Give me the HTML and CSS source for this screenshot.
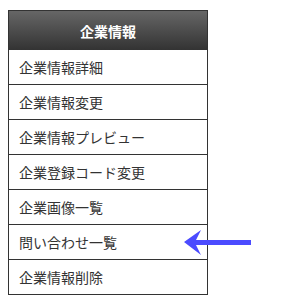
FILE: index.html
```html
<!DOCTYPE html>
<html lang="ja">
  <head>
    <meta charset="UTF-8" />
    <title>企業情報</title>
    <link rel="stylesheet" href="styles.css">
  </head>
  <body>
    <div class="menu">
      <div class="menu-title">企業情報</div>
      <ul class="menu-list">
        <li>企業情報詳細</li>
        <li>企業情報変更</li>
        <li>企業情報プレビュー</li>
        <li>企業登録コード変更</li>
        <li>企業画像一覧</li>
        <li class="marked">問い合わせ一覧
          <svg class="arrow" width="75" height="32" viewBox="0 0 75 32">
            <polygon points="4,16 21,4 16,14 71,14 71,19 16,19 21,29" fill="#4b4bff" />
          </svg>
        </li>
        <li>企業情報削除</li>
      </ul>
    </div>
  </body>
</html>
```

FILE: styles.css
```css
* {
  margin: 0;
  padding: 0;
}
body {
  font-family: "Noto Sans CJK JP", "Noto Sans", sans-serif;
  color: #333;
  background: #fff;
  padding: 10px 8px;
}
.menu {
  width: 198px;
  border: 1px solid #333;
  border-top: none;
}
.menu-title {
  height: 40px;
  line-height: 40px;
  text-align: center;
  color: #fff;
  font-weight: bold;
  font-size: 14px;
  background: linear-gradient(#666, #333);
  margin: 0 -1px;
  border: 1px solid #333;
  border-bottom: none;
  box-sizing: border-box;
}
.menu-list {
  list-style: none;
}
.menu-list li {
  height: 34px;
  line-height: 34px;
  font-size: 14px;
  padding-left: 10px;
  border-top: 1px solid #333;
  position: relative;
}
.menu-list li:first-child {
  border-top: none;
}
.arrow {
  position: absolute;
  left: 171px;
  top: 1px;
}
```
